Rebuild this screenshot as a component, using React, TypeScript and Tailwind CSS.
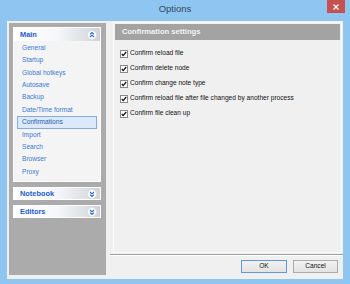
import React from "react";

const FONT = { fontFamily: '"Liberation Sans", Arial, sans-serif' };

function Chevron({ up }: { up: boolean }) {
  return (
    <svg width="10" height="10" viewBox="0 0 10 10" className="shrink-0">
      <circle cx="5" cy="5" r="4.5" fill="#ffffff" stroke="#d4dbe6" strokeWidth="0.8" />
      {up ? (
        <g fill="none" stroke="#2a62d0" strokeWidth="1.1">
          <polyline points="3,4.3 5,2.5 7,4.3" />
          <polyline points="3,7 5,5.2 7,7" />
        </g>
      ) : (
        <g fill="none" stroke="#2a62d0" strokeWidth="1.1">
          <polyline points="3,3 5,4.8 7,3" />
          <polyline points="3,5.7 5,7.5 7,5.7" />
        </g>
      )}
    </svg>
  );
}

function Header({ title, up, h }: { title: string; up: boolean; h: string }) {
  return (
    <div
      className={`flex items-center justify-between pl-[6px] pr-[3px] bg-gradient-to-r from-white via-[#f6f7f9] to-[#cfd3d9] ${h}`}
    >
      <span className="text-[7.4px] font-bold text-[#1d5bd3] leading-none">{title}</span>
      <Chevron up={up} />
    </div>
  );
}

function Check({ label }: { label: string }) {
  return (
    <div className="flex items-center h-[15px]">
      <svg width="8" height="8" viewBox="0 0 8 8" className="shrink-0">
        <rect x="0.5" y="0.5" width="7" height="7" fill="#ffffff" stroke="#8a8a8a" />
        <polyline points="1.8,4 3.2,5.6 6.2,2" fill="none" stroke="#111" strokeWidth="1.3" />
      </svg>
      <span className="ml-[2px] text-[6.6px] text-[#111] leading-none whitespace-nowrap">{label}</span>
    </div>
  );
}

export default function App() {
  const items = [
    "General",
    "Startup",
    "Global hotkeys",
    "Autosave",
    "Backup",
    "Date/Time format",
    "Confirmations",
    "Import",
    "Search",
    "Browser",
    "Proxy",
  ];
  const checks = [
    "Confirm reload file",
    "Confirm delete node",
    "Confirm change note type",
    "Confirm reload file after file changed by another process",
    "Confirm file clean up",
  ];
  return (
    <div className="w-[350px] h-[284px] bg-[#8ec5f1] flex flex-col overflow-hidden" style={FONT}>
      <div className="relative h-[21px] shrink-0 flex justify-center pt-[3px]">
        <span className="text-[9.5px] leading-[12px] text-[#34495e]">Options</span>
        <div className="absolute top-0 right-[5px] w-[18px] h-[13px] bg-[#c75050] flex items-center justify-center">
          <svg width="6" height="6" viewBox="0 0 6 6">
            <path d="M0.5 0.5 L5.5 5.5 M5.5 0.5 L0.5 5.5" stroke="#ffffff" strokeWidth="1.3" />
          </svg>
        </div>
      </div>
      <div className="flex-1 mx-[7px] mb-[5px] bg-[#f0f0f0] flex">
        <div className="w-[97px] ml-[2px] mt-[2px] mb-[4px] bg-[#ababab] pt-[4px] pl-[4px] pr-[5px] flex flex-col">
          <div className="border border-white bg-[#f4f4f4]">
            <Header title="Main" up={true} h="h-[13px]" />
            <div className="pt-[1px] pb-[3px]">
              {items.map((it) =>
                it === "Confirmations" ? (
                  <div
                    key={it}
                    className="h-[12.4px] mx-[3px] border border-[#84acdd] bg-[#dce9fa] flex items-center pl-[4px]"
                  >
                    <span className="text-[6.6px] text-[#2b5ea8] leading-none">{it}</span>
                  </div>
                ) : (
                  <div key={it} className="h-[12.4px] flex items-center pl-[8px]">
                    <span className="text-[6.6px] text-[#3a7ad6] leading-none">{it}</span>
                  </div>
                )
              )}
            </div>
          </div>
          <div className="mt-[5px] border border-white">
            <Header title="Notebook" up={false} h="h-[11px]" />
          </div>
          <div className="mt-[5px] border border-white">
            <Header title="Editors" up={false} h="h-[11px]" />
          </div>
        </div>
        <div className="flex-1 ml-[4px] flex flex-col">
          <div className="flex-1 ml-[3px] mr-[1px] mt-[1px] border border-[#fafafa] flex flex-col">
            <div className="mt-[1px] mx-[1px] h-[16px] bg-[#a3a3a3] flex items-center pl-[7px]">
              <span className="text-[7.6px] font-bold text-[#f4f4f4] leading-none">Confirmation settings</span>
            </div>
            <div className="mt-[6px] pl-[6px] flex flex-col">
              {checks.map((c) => (
                <Check key={c} label={c} />
              ))}
            </div>
          </div>
          <div className="mt-[1px] h-px bg-[#a0a0a0]" />
          <div className="h-px bg-white" />
          <div className="mt-[4px] mb-[6px] h-[13px] flex justify-end gap-[6px] pr-[5px]">
            <div className="w-[46px] h-[13px] border border-[#5a9be0] bg-gradient-to-b from-[#f2f2f2] to-[#e3e3e3] flex items-center justify-center">
              <span className="text-[6.6px] text-[#111] leading-none">OK</span>
            </div>
            <div className="w-[45px] h-[13px] border border-[#acacac] bg-gradient-to-b from-[#f2f2f2] to-[#e3e3e3] flex items-center justify-center">
              <span className="text-[6.6px] text-[#111] leading-none">Cancel</span>
            </div>
          </div>
        </div>
      </div>
    </div>
  );
}
